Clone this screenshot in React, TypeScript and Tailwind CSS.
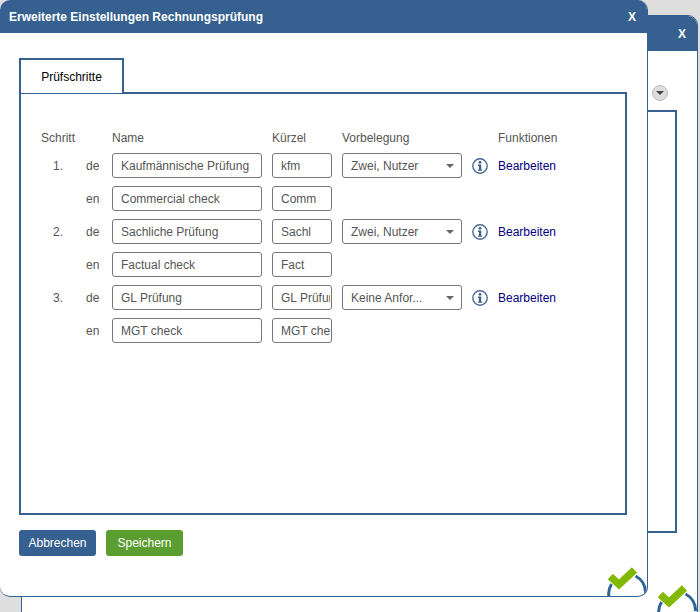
import React from "react";

const steps = [
  { nr: "1.", de: "Kaufmännische Prüfung", en: "Commercial check", kde: "kfm", ken: "Comm", pre: "Zwei, Nutzer" },
  { nr: "2.", de: "Sachliche Prüfung", en: "Factual check", kde: "Sachl", ken: "Fact", pre: "Zwei, Nutzer" },
  { nr: "3.", de: "GL Prüfung", en: "MGT check", kde: "GL Prüfung", ken: "MGT check", pre: "Keine Anfor..." },
];

const Field = ({ value, className }: { value: string; className: string }) => (
  <input
    readOnly
    value={value}
    className={`h-[25px] border border-[#777] rounded-[3px] bg-white pl-2 pr-px pt-[1px] text-[#555] outline-none ${className}`}
  />
);

const Check = ({ className }: { className: string }) => (
  <svg viewBox="0 0 44 44" className={className} fill="none">
    <path d="M5.5 33 A18.5 18.5 0 0 1 7.5 18" stroke="#2f6496" strokeWidth="3" />
    <path d="M31.5 10 A18.5 18.5 0 0 1 41.5 27" stroke="#2f6496" strokeWidth="3" />
    <path d="M6.3 10.5 L15 18.5 L30.5 4" stroke="#82b800" strokeWidth="7.5" />
  </svg>
);

const InfoIcon = () => (
  <svg viewBox="0 0 16 16" className="w-4 h-4" fill="none">
    <circle cx="8" cy="8" r="7.2" stroke="#4d6a94" strokeWidth="1.4" />
    <circle cx="8" cy="4.3" r="1.4" fill="#3f5d8a" />
    <path d="M6 6.6 H9.2 V11.4 H10.2 V12.8 H5.9 V11.4 H7 V8 H6 Z" fill="#3f5d8a" />
  </svg>
);

const App = () => {
  return (
    <div className="relative w-[700px] h-[612px] overflow-hidden bg-[#dedede] font-['Liberation_Sans',Arial,sans-serif] text-xs">
      {/* dialog behind */}
      <div className="absolute left-[21px] top-[15px] w-[677px] h-[620px] bg-white border border-[#35608f] rounded-[10px] overflow-hidden">
        <div className="h-[35px] bg-[#35608f] flex justify-end items-center pr-[11px] pt-[1px] text-white font-bold">X</div>
        <div className="flex justify-end items-start pt-[31px]">
          <div className="w-[3px] h-[28px] bg-[#35608f] mr-[37px]" />
          <div className="relative mr-[37px]">
            <div className="absolute -left-[8px] top-[3px] w-[16px] h-[16px] rounded-full bg-[#ddd] border border-[#bbb] flex items-center justify-center">
              <div className="w-0 h-0 border-x-[4px] border-x-transparent border-t-[4px] border-t-[#444]" />
            </div>
          </div>
        </div>
        <div className="flex justify-end pr-[20px]">
          <div className="w-[100px] h-[423px] border-[2px] border-[#35608f] border-l-0" />
        </div>
        <Check className="absolute left-[632px] top-[568px] w-[44px] h-[44px]" />
      </div>

      {/* front dialog */}
      <div className="absolute left-0 top-0 w-[648px] h-[597px] bg-white border-r border-b border-[#35608f] rounded-[10px] overflow-hidden flex flex-col">
        <div className="h-[33px] shrink-0 bg-[#35608f] flex justify-between items-center pl-[9px] pr-[11px] text-white font-bold">
          <span>Erweiterte Einstellungen Rechnungsprüfung</span>
          <span>X</span>
        </div>

        <div className="pl-[19px] pr-[20px] pt-[25px]">
          <div className="w-[105px] h-[35px] border-[2px] border-b-0 border-[#35608f] flex items-center justify-center text-black relative z-10 bg-white">
            Prüfschritte
          </div>
          <div className="-mt-[1px] h-[423px] border-[2px] border-[#35608f] pl-[20px] pt-[36px]">
            <div className="flex text-[#555] h-[16px] leading-[16px]">
              <div className="w-[71px]">Schritt</div>
              <div className="w-[160px]">Name</div>
              <div className="w-[70px]">Kürzel</div>
              <div className="w-[156px]">Vorbelegung</div>
              <div>Funktionen</div>
            </div>
            <div className="flex flex-col gap-y-2 mt-[7px] text-[#555]">
              {steps.map((s) => (
                <React.Fragment key={s.nr}>
                  <div className="flex items-center">
                    <div className="w-[45px] pl-[12px]">{s.nr}</div>
                    <div className="w-[26px]">de</div>
                    <Field value={s.de} className="w-[150px]" />
                    <Field value={s.kde} className="w-[60px] ml-[10px]" />
                    <div className="w-[120px] ml-[10px] h-[25px] border border-[#777] rounded-[3px] pl-2 pr-[7px] flex items-center justify-between">
                      <span>{s.pre}</span>
                      <div className="w-0 h-0 border-x-[4px] border-x-transparent border-t-[4px] border-t-[#666]" />
                    </div>
                    <div className="ml-[10px]"><InfoIcon /></div>
                    <div className="ml-[10px] text-[#00007f]">Bearbeiten</div>
                  </div>
                  <div className="flex items-center">
                    <div className="w-[45px]" />
                    <div className="w-[26px]">en</div>
                    <Field value={s.en} className="w-[150px]" />
                    <Field value={s.ken} className="w-[60px] ml-[10px]" />
                  </div>
                </React.Fragment>
              ))}
            </div>
          </div>
          <div className="flex gap-[10px] mt-[15px]">
            <div className="w-[77px] h-[26px] rounded-[3px] bg-[#35608f] text-white flex items-center justify-center">Abbrechen</div>
            <div className="w-[77px] h-[26px] rounded-[3px] bg-[#5c9d31] text-white flex items-center justify-center">Speichern</div>
          </div>
        </div>
        <Check className="absolute left-[604px] top-[566px] w-[44px] h-[44px]" />
      </div>
    </div>
  );
};

export default App;
